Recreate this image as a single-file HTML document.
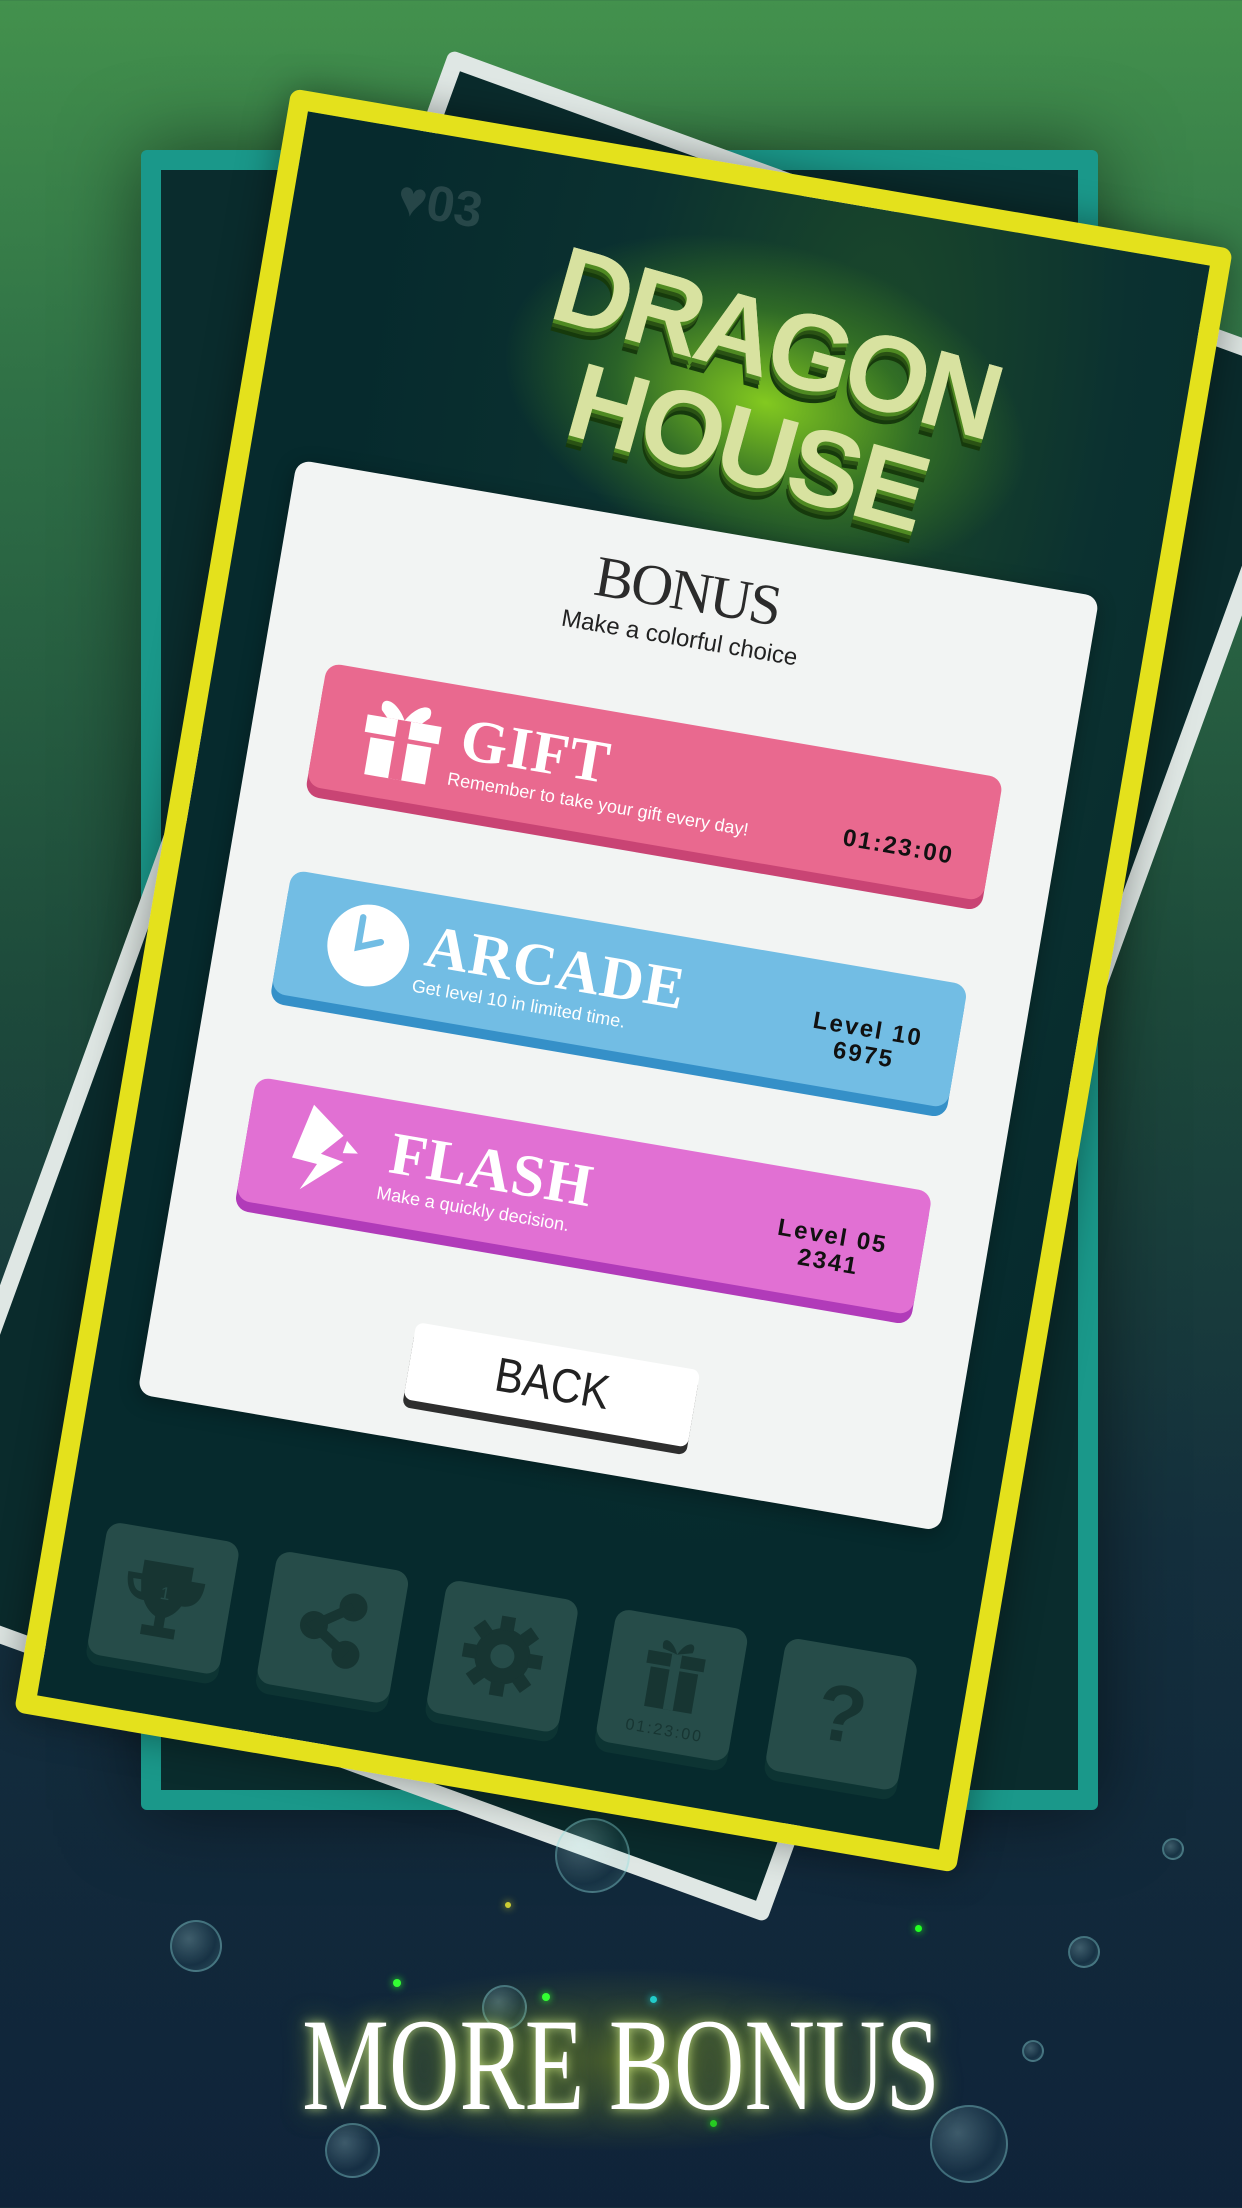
<!DOCTYPE html>
<html><head><meta charset="utf-8">
<style>
*{margin:0;padding:0;box-sizing:border-box}
html,body{width:1242px;height:2208px;overflow:hidden}
body{position:relative;font-family:"Liberation Sans",sans-serif;
background:linear-gradient(180deg,#43914d 0%,#2f7046 18%,#1d4a3b 45%,#142f3d 70%,#0f2339 100%);}
.abs{position:absolute}
.teal{left:141px;top:150px;width:957px;height:1660px;border:20px solid #1a988a;background:#0a2c2d;border-radius:6px;box-shadow:0 0 80px rgba(0,0,0,.5)}
.white{left:139px;top:160px;width:938px;height:1652px;border:17px solid #dfe7e4;border-radius:8px;transform:rotate(20deg);background:#0a2b2c}
.yellow{left:146px;top:157px;width:955px;height:1647px;border:20px solid #e4e11c;border-radius:10px;transform:rotate(9.7deg);background:radial-gradient(ellipse at 65% 12%,#1c4a2a 0%,#0b3130 30%,#062a2d 60%);box-shadow:0 0 40px rgba(0,0,0,.4)}
.panel{left:48px;top:345px;width:814px;height:948px;background:#f2f4f3;border-radius:14px;box-shadow:0 4px 20px rgba(0,0,0,.3)}
.btn{left:64px;width:686px;height:125px;border-radius:14px}
.btn .t{position:absolute;left:145px;top:18px;font-family:"Liberation Serif",serif;font-weight:bold;font-size:60px;color:#fff;letter-spacing:1px}
.btn .s{position:absolute;left:138px;top:84px;font-size:18px;color:#fff}
.btn .r{position:absolute;right:36px;font-size:24px;font-weight:bold;color:#111;text-align:center;letter-spacing:2px;line-height:26px}
.tile{width:134px;height:134px;background:#264c49;border-radius:14px;box-shadow:0 10px 0 #0d3433}
.dot{border-radius:50%}
.bub{border-radius:50%;border:2px solid rgba(140,220,220,.35);background:radial-gradient(circle at 35% 35%,rgba(200,255,255,.25),rgba(100,180,190,.08) 60%,rgba(150,230,230,.2))}
</style></head><body>

<div class="abs teal"></div>
<div class="abs white"></div>
<div class="abs yellow">
  <div class="abs" style="left:103px;top:40px;font-size:50px;font-weight:bold;color:rgba(255,255,255,.13)">♥03</div>
  <div class="abs" style="left:230px;top:50px;width:540px;height:320px;transform:rotate(6deg);background:radial-gradient(ellipse,rgba(150,225,30,.85) 0%,rgba(80,160,30,.45) 40%,rgba(20,80,40,0) 70%)"></div>
  <div class="abs" style="left:265px;top:95px;width:460px;text-align:center;transform:rotate(6deg);font-family:'Liberation Sans',sans-serif;font-weight:900;font-size:108px;line-height:108px;color:#d8e2a0;text-shadow:0 4px 0 #4f8a22,0 8px 0 #2a5214,0 12px 0 #163a0c;letter-spacing:-4px;background:linear-gradient(180deg,#e6ecb8 0%,#cfdc96 45%,#5e9c2a 60%,#7cb33a 100%);-webkit-background-clip:text;background-clip:text">DRAGON<br>HOUSE</div>

  <div class="abs panel">
    <div class="abs" style="left:0;width:814px;top:30px;text-align:center;font-family:'Liberation Serif',serif;font-size:58px;color:#2b2b2b;letter-spacing:-2px">BONUS</div>
    <div class="abs" style="left:0;width:814px;top:98px;text-align:center;font-size:24px;color:#222">Make a colorful choice</div>

    <div class="abs btn" style="top:195px;background:#e9698f;box-shadow:0 10px 0 #c94474">
      <svg class="abs" style="left:46px;top:20px" width="80" height="86" viewBox="0 0 72 78"><g fill="#fff"><rect x="2" y="22" width="68" height="16"/><rect x="8" y="42" width="56" height="34"/><rect x="30" y="22" width="12" height="54" fill="#e9698f"/><path d="M36 22 C26 4 10 2 14 16 L20 22Z M36 22 C46 4 62 2 58 16 L52 22Z"/></g></svg>
      <div class="t">GIFT</div>
      <div class="s">Remember to take your gift every day!</div>
      <div class="r" style="bottom:26px">01:23:00</div>
    </div>

    <div class="abs btn" style="top:405px;background:#72bde4;box-shadow:0 10px 0 #3590c8">
      <svg class="abs" style="left:46px;top:20px" width="84" height="84" viewBox="0 0 78 78"><circle cx="39" cy="39" r="38" fill="#fff"/><path d="M30 14 V42 L50 34" stroke="#72bde4" stroke-width="6" fill="none" stroke-linecap="round"/></svg>
      <div class="t">ARCADE</div>
      <div class="s">Get level 10 in limited time.</div>
      <div class="r" style="top:48px">Level 10<br>6975</div>
    </div>

    <div class="abs btn" style="top:615px;background:#e170d3;box-shadow:0 10px 0 #b13bb9">
      <svg class="abs" style="left:46px;top:16px" width="78" height="90" viewBox="0 0 72 84"><path fill="#fff" d="M14 2 L46 26 L28 46 L50 50 L14 82 L26 56 L2 54Z M50 30 L62 40 L48 42Z"/></svg>
      <div class="t">FLASH</div>
      <div class="s">Make a quickly decision.</div>
      <div class="r" style="top:48px">Level 05<br>2341</div>
    </div>

    <div class="abs" style="left:263px;top:830px;width:288px;height:78px;background:#fff;border-radius:8px;box-shadow:0 8px 0 #2e2e2e;text-align:center;font-size:48px;line-height:78px;color:#222"><span style="display:inline-block;transform:scaleX(.88)">BACK</span></div>
  </div>

  <div class="abs tile" style="left:41px;top:1423px"><svg width="134" height="134" viewBox="0 0 134 134"><path fill="#173532" d="M42 32 H92 V46 H106 C106 66 96 72 86 72 C82 80 76 84 72 86 V96 H84 V106 H50 V96 H62 V86 C58 84 52 80 48 72 C38 72 28 66 28 46 H42Z M34 52 C36 62 40 64 44 64 L42 52Z M100 52 C98 62 94 64 90 64 L92 52Z"/><text x="63" y="68" font-size="18" fill="#264c49" font-family="Liberation Sans">1</text></svg></div>
  <div class="abs tile" style="left:213px;top:1423px"><svg width="134" height="134" viewBox="0 0 134 134"><g fill="#173532"><circle cx="84" cy="44" r="14"/><circle cx="48" cy="68" r="14"/><circle cx="84" cy="92" r="14"/></g><path d="M84 44 L48 68 L84 92" stroke="#173532" stroke-width="10" fill="none"/></svg></div>
  <div class="abs tile" style="left:385px;top:1423px"><svg width="134" height="134" viewBox="0 0 134 134"><g fill="#173532" transform="translate(67 67)"><circle r="28"/><g id="tt"><rect x="-7" y="-40" width="14" height="14"/><rect x="-7" y="26" width="14" height="14"/><rect x="-40" y="-7" width="14" height="14"/><rect x="26" y="-7" width="14" height="14"/></g><use href="#tt" transform="rotate(45)"/></g><circle cx="67" cy="67" r="12" fill="#264c49"/></svg></div>
  <div class="abs tile" style="left:557px;top:1423px"><svg width="134" height="134" viewBox="0 0 134 134"><g fill="#173532"><rect x="38" y="36" width="58" height="13"/><rect x="43" y="52" width="48" height="40"/><path d="M67 36 C60 20 48 20 52 32Z M67 36 C74 20 86 20 82 32Z"/></g><rect x="62" y="36" width="10" height="56" fill="#264c49"/><text x="67" y="118" text-anchor="middle" font-size="16" fill="#173532" font-family="Liberation Sans" letter-spacing="2">01:23:00</text></svg></div>
  <div class="abs tile" style="left:729px;top:1423px"><div style="text-align:center;font-size:80px;font-weight:bold;color:#173532;line-height:134px">?</div></div>
</div>

<div class="abs" style="left:260px;top:1960px;width:720px;height:200px;background:radial-gradient(ellipse,rgba(130,150,30,.45),rgba(20,40,50,0) 65%)"></div>
<div class="abs bub" style="left:170px;top:1920px;width:52px;height:52px"></div>
<div class="abs bub" style="left:930px;top:2105px;width:78px;height:78px"></div>
<div class="abs bub" style="left:1068px;top:1936px;width:32px;height:32px"></div>
<div class="abs bub" style="left:1162px;top:1838px;width:22px;height:22px"></div>
<div class="abs bub" style="left:555px;top:1818px;width:75px;height:75px"></div>
<div class="abs bub" style="left:482px;top:1985px;width:45px;height:45px"></div>
<div class="abs bub" style="left:325px;top:2123px;width:55px;height:55px"></div>
<div class="abs bub" style="left:1022px;top:2040px;width:22px;height:22px"></div>
<div class="abs dot" style="left:393px;top:1979px;width:8px;height:8px;background:#3f3;box-shadow:0 0 8px #3f3"></div>
<div class="abs dot" style="left:542px;top:1993px;width:8px;height:8px;background:#3f3;box-shadow:0 0 8px #3f3"></div>
<div class="abs dot" style="left:650px;top:1996px;width:7px;height:7px;background:#2cc;box-shadow:0 0 8px #2cc"></div>
<div class="abs dot" style="left:915px;top:1925px;width:7px;height:7px;background:#2f2;box-shadow:0 0 8px #2f2"></div>
<div class="abs dot" style="left:505px;top:1902px;width:6px;height:6px;background:#cc3;box-shadow:0 0 8px #cc3"></div>
<div class="abs dot" style="left:710px;top:2120px;width:7px;height:7px;background:#2c2;box-shadow:0 0 8px #2c2"></div>

<div class="abs" style="left:0;width:1242px;top:1995px;text-align:center;font-family:'Liberation Serif',serif;font-size:132px;line-height:140px;color:#fff;text-shadow:0 0 12px rgba(230,255,150,.7),0 0 30px rgba(180,220,60,.5);transform:scaleX(0.74);white-space:nowrap">MORE BONUS</div>
</body></html>
